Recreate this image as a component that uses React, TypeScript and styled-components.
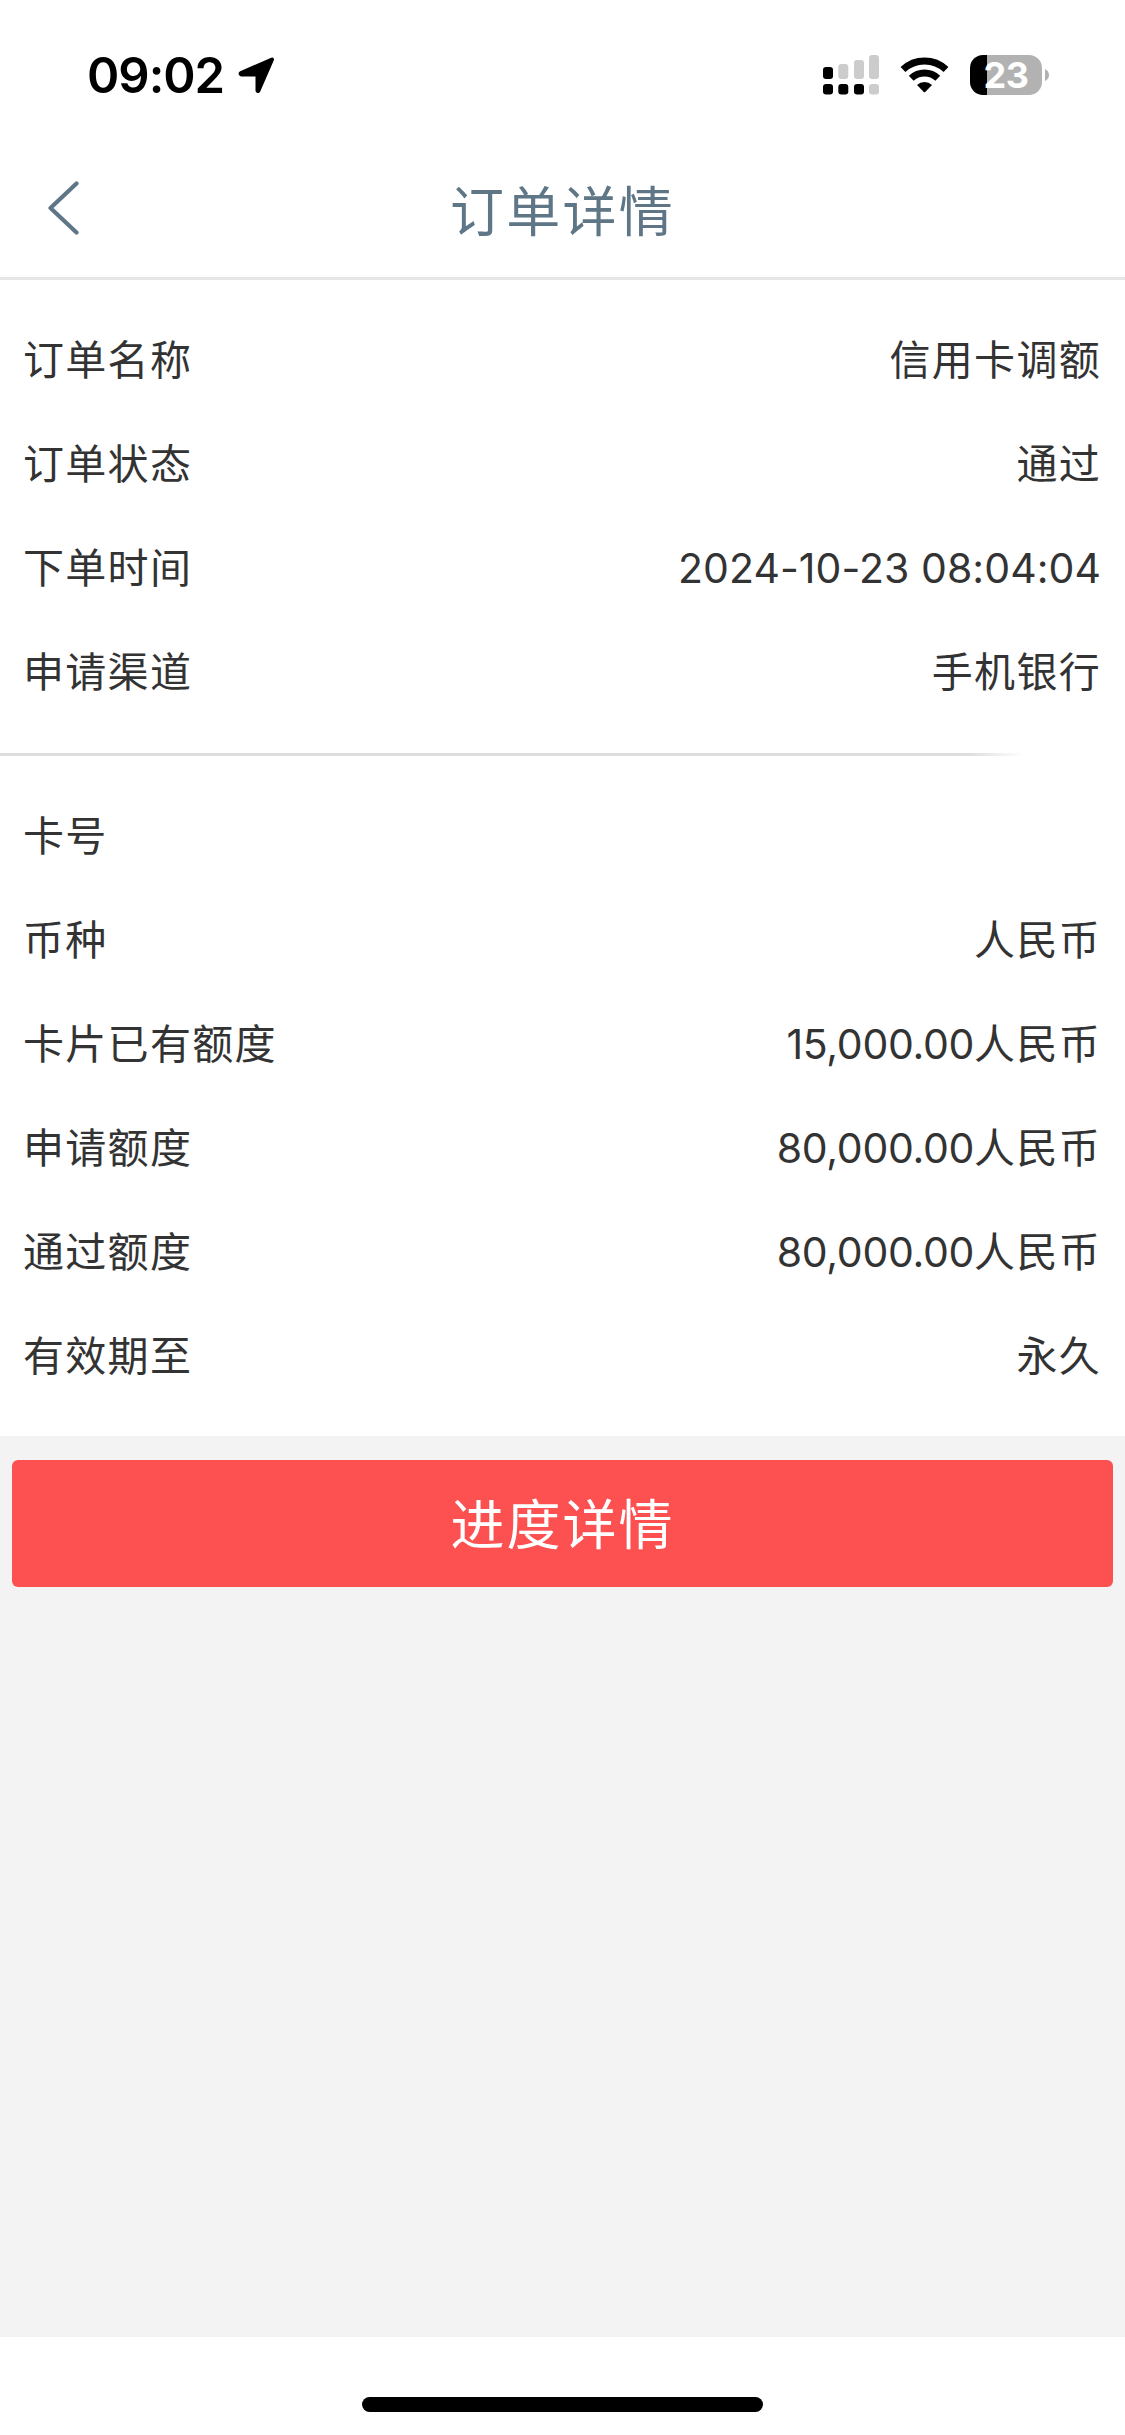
import React from "react";
import styled, { createGlobalStyle } from "styled-components";

const GlobalStyle = createGlobalStyle`
  *, *::before, *::after { box-sizing: border-box; }
  html, body { margin: 0; padding: 0; background: #fff; }
  body { font-family: Inter, "Noto Sans CJK SC", sans-serif; color: #333; }
`;

const Screen = styled.div`
  width: 1125px;
  height: 2435px;
  display: flex;
  flex-direction: column;
  background: #fff;
  overflow: hidden;
`;

const StatusBar = styled.div`
  height: 141px;
  flex: none;
  display: flex;
  align-items: flex-start;
  justify-content: space-between;
  padding: 55px 76px 0 87px;
`;

const StatusGroup = styled.div<{ $gap: number }>`
  display: flex;
  align-items: flex-start;
  gap: ${(p) => p.$gap}px;
  height: 40px;
`;

const Clock = styled.span`
  font-size: 49px;
  line-height: 42px;
  font-weight: 600;
  letter-spacing: -1px;
  color: #000;
`;

const BatteryWrap = styled.div`
  display: flex;
  align-items: center;
  gap: 3px;
`;

const BatteryBody = styled.div<{ $level: number }>`
  width: 72px;
  height: 40px;
  border-radius: 13px;
  display: flex;
  align-items: center;
  justify-content: center;
  font-size: 36px;
  line-height: 40px;
  font-weight: 700;
  letter-spacing: -0.5px;
  color: #fff;
  background: linear-gradient(90deg, #000 ${(p) => p.$level}%, #b2b2b2 ${(p) => p.$level}%);
`;

const NavBar = styled.header`
  height: 139px;
  flex: none;
  display: grid;
  grid-template-columns: 120px 1fr 120px;
  align-items: center;
  border-bottom: 3px solid #e6e6e6;
`;

const BackButton = styled.button`
  border: 0;
  background: none;
  padding: 0 0 2px 48px;
  display: flex;
  align-items: center;
`;

const Title = styled.h1`
  margin: 0;
  padding-top: 7px;
  text-align: center;
  font-size: 54px;
  line-height: 80px;
  font-weight: 400;
  letter-spacing: 2.2px;
  color: #5f7687;
`;

const Section = styled.section<{ $bottom: number }>`
  flex: none;
  padding: 28px 24px ${(p) => p.$bottom}px 23px;
`;

const Row = styled.div`
  height: 104px;
  display: flex;
  align-items: center;
  justify-content: space-between;
  font-size: 41px;
  line-height: 60px;
`;

const Label = styled.span`
  letter-spacing: 1.3px;
`;

const Value = styled.span`
  display: flex;
`;

const Digits = styled.span<{ $amount: boolean }>`
  letter-spacing: ${(p) => (p.$amount ? "-0.3px" : "0.05px")};
`;

const Han = styled.span`
  letter-spacing: 1.3px;
`;

const Divider = styled.div`
  height: 3px;
  flex: none;
  background: linear-gradient(90deg, #ddd 86%, #fff 91%);
`;

const Footer = styled.main`
  flex: 1;
  background: #f3f3f3;
  padding: 24px 12px;
`;

const PrimaryButton = styled.button`
  display: block;
  width: 100%;
  height: 127px;
  border: 0;
  border-radius: 6px;
  background: #fd5050;
  color: #fff;
  padding: 4px 0 0;
  font-family: inherit;
  font-size: 54px;
  line-height: 80px;
  letter-spacing: 2px;
`;

const HomeArea = styled.div`
  height: 98px;
  flex: none;
  display: flex;
  justify-content: center;
  padding-top: 60px;
`;

const HomeIndicator = styled.div`
  width: 401px;
  height: 15px;
  border-radius: 8px;
  background: #000;
`;

type Field = { label: string; digits?: string; text?: string };

const orderFields: Field[] = [
  { label: "订单名称", text: "信用卡调额" },
  { label: "订单状态", text: "通过" },
  { label: "下单时间", digits: "2024-10-23 08:04:04" },
  { label: "申请渠道", text: "手机银行" },
];

const cardFields: Field[] = [
  { label: "卡号" },
  { label: "币种", text: "人民币" },
  { label: "卡片已有额度", digits: "15,000.00", text: "人民币" },
  { label: "申请额度", digits: "80,000.00", text: "人民币" },
  { label: "通过额度", digits: "80,000.00", text: "人民币" },
  { label: "有效期至", text: "永久" },
];

const FieldRow = ({ label, digits, text }: Field) => (
  <Row>
    <Label>{label}</Label>
    <Value>
      {digits && <Digits $amount={Boolean(text)}>{digits}</Digits>}
      {text && <Han>{text}</Han>}
    </Value>
  </Row>
);

const LocationIcon = () => (
  <svg width="38" height="40" viewBox="0 0 38 40">
    <path
      d="M3 18 34 4.500 20.500 35.500 Q20 36.500 19.500 35.500 V20 Q19.500 19.500 19 19.500 H3.500 Q2 18.800 3 18Z"
      fill="#000"
      stroke="#000"
      strokeWidth="4"
      strokeLinejoin="round"
    />
  </svg>
);

const SignalIcon = () => (
  <svg width="57" height="40" viewBox="0 0 57 40">
    <g fill="#000">
      <rect x="0" y="12" width="10" height="12" rx="3" />
      <rect x="0" y="29" width="10" height="10.500" rx="3" />
      <rect x="15.300" y="29" width="10" height="10.500" rx="3" />
      <rect x="31" y="29" width="10" height="10.500" rx="3" />
    </g>
    <g fill="#ccc">
      <rect x="15.300" y="9" width="10" height="15" rx="3" />
      <rect x="31" y="5" width="10" height="19" rx="3" />
      <rect x="46" y="0" width="10" height="24" rx="3" />
      <rect x="46" y="29" width="10" height="10.500" rx="3" />
    </g>
  </svg>
);

const WifiIcon = () => (
  <svg width="50" height="40" viewBox="0 0 50 40">
    <g fill="none" stroke="#000" strokeWidth="7">
      <path d="M3 14.500A31.500 31.500 0 0 1 46 14.500" />
      <path d="M11.200 23.200A19.500 19.500 0 0 1 37.800 23.200" />
    </g>
    <path d="M17 30A11 11 0 0 1 32 30L25.200 37Q24.500 37.600 23.800 37Z" fill="#000" />
  </svg>
);

export default function App() {
  return (
    <>
      <GlobalStyle />
      <Screen>
        <StatusBar>
          <StatusGroup $gap={14}>
            <Clock>09:02</Clock>
            <LocationIcon />
          </StatusGroup>
          <StatusGroup $gap={20}>
            <SignalIcon />
            <WifiIcon />
            <BatteryWrap>
              <BatteryBody $level={23}>23</BatteryBody>
              <svg width="4" height="12" viewBox="0 0 4 12">
                <path d="M0 0Q4 2 4 6T0 12Z" fill="#b2b2b2" />
              </svg>
            </BatteryWrap>
          </StatusGroup>
        </StatusBar>
        <NavBar>
          <BackButton aria-label="返回">
            <svg width="32" height="56" viewBox="0 0 32 56">
              <path d="M28.500 3.500 2.500 28 28.500 52.500" fill="none" stroke="#5f7687" strokeWidth="4.200" strokeLinecap="round" strokeLinejoin="round" />
            </svg>
          </BackButton>
          <Title>订单详情</Title>
        </NavBar>
        <Section $bottom={29}>
          {orderFields.map((f) => (
            <FieldRow key={f.label} {...f} />
          ))}
        </Section>
        <Divider />
        <Section $bottom={28}>
          {cardFields.map((f) => (
            <FieldRow key={f.label} {...f} />
          ))}
        </Section>
        <Footer>
          <PrimaryButton>进度详情</PrimaryButton>
        </Footer>
        <HomeArea>
          <HomeIndicator />
        </HomeArea>
      </Screen>
    </>
  );
}
